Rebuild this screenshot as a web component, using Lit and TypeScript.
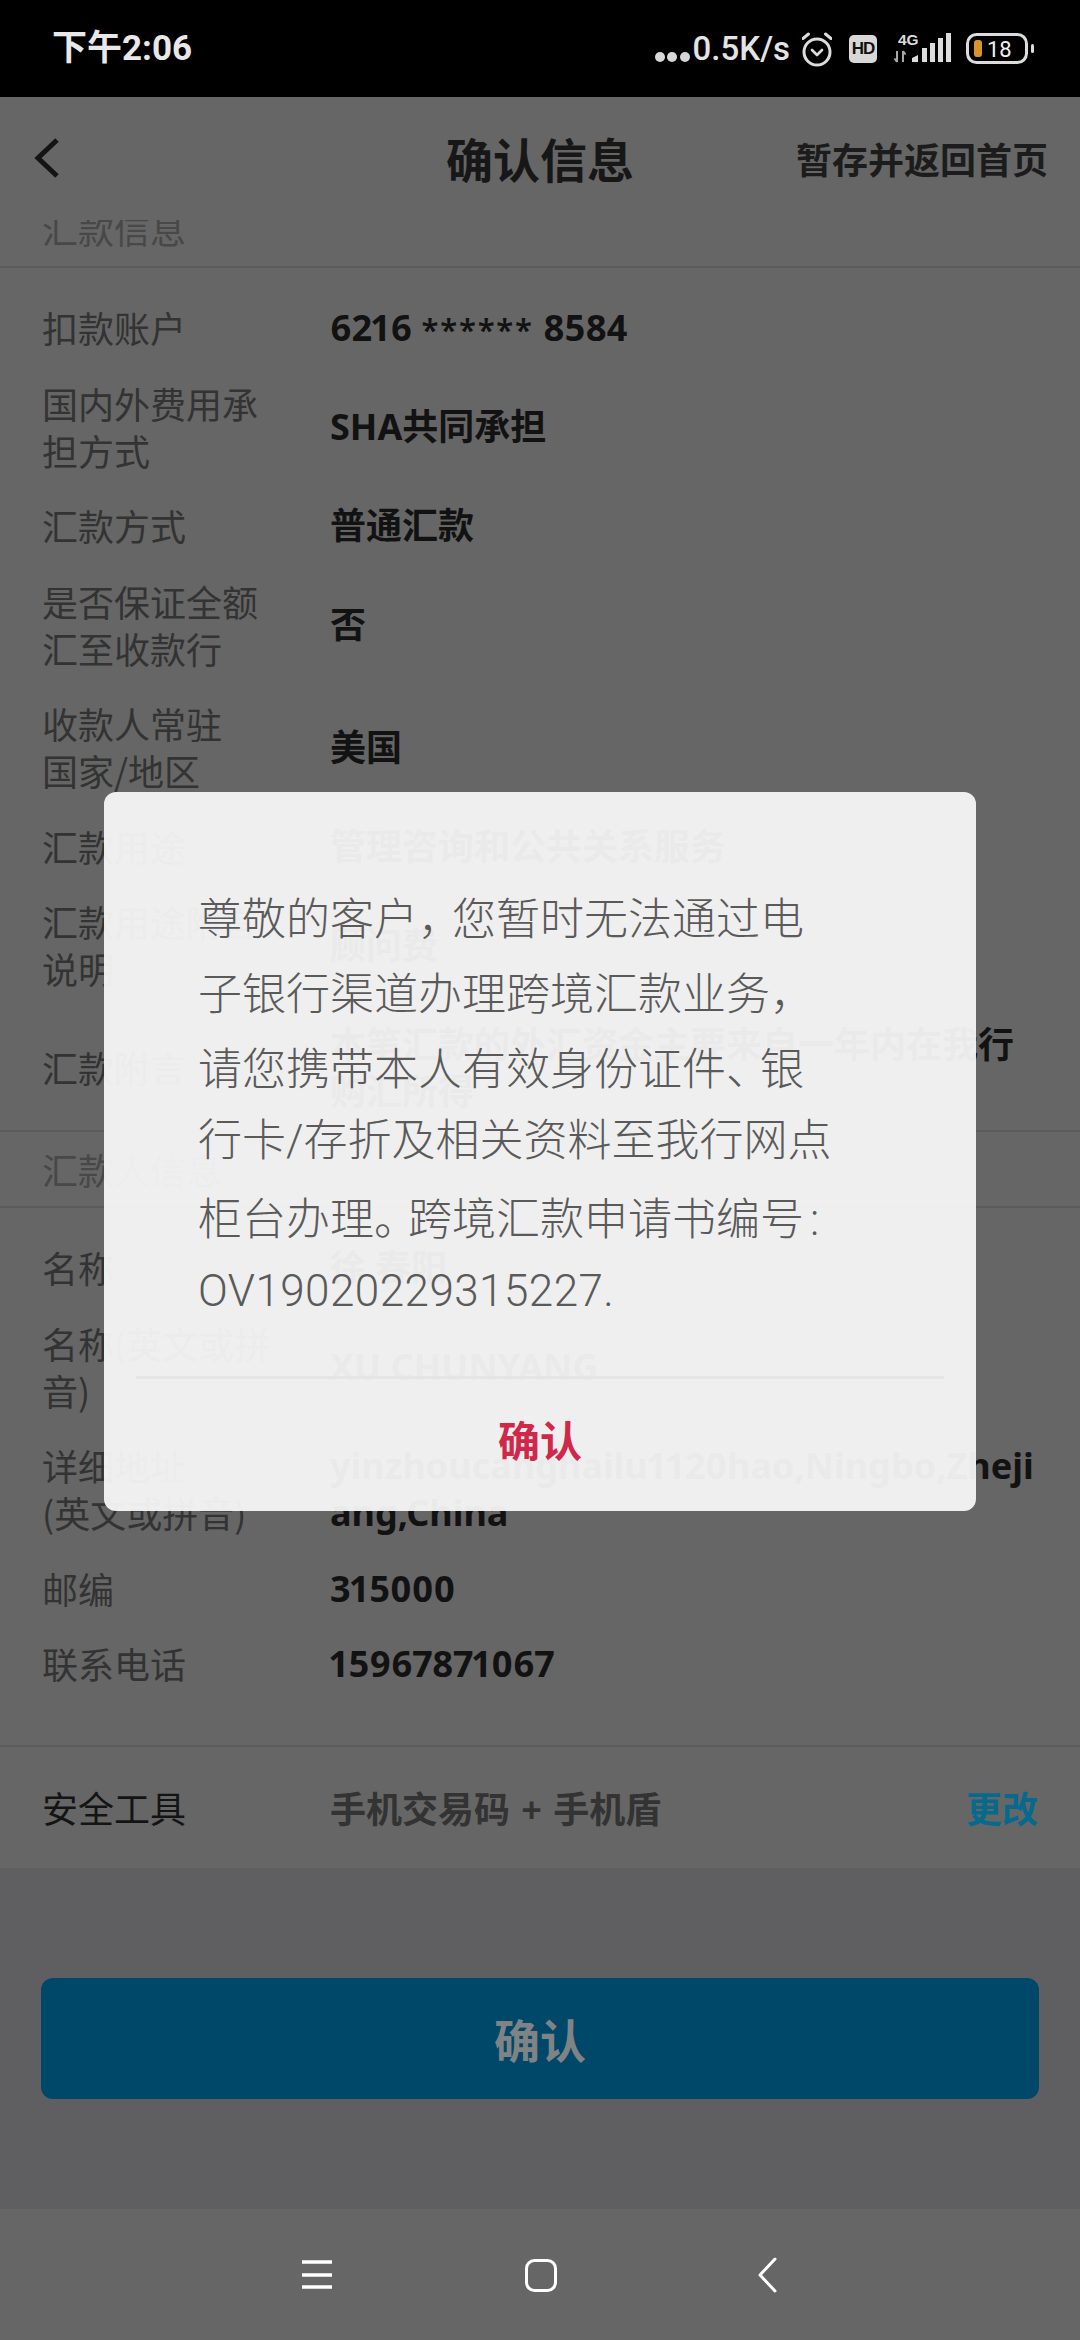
import { LitElement, html, css, svg } from "lit";
import { customElement } from "lit/decorators.js";

type Row = { label: string[]; value: unknown[]; };

const TRANSFER: Row[] = [
  { label: ["扣款账户"], value: [html`6216 <span class="stars">******</span> 8584`] },
  { label: ["国内外费用承", "担方式"], value: ["SHA共同承担"] },
  { label: ["汇款方式"], value: ["普通汇款"] },
  { label: ["是否保证全额", "汇至收款行"], value: ["否"] },
  { label: ["收款人常驻", "国家/地区"], value: ["美国"] },
  { label: ["汇款用途"], value: ["管理咨询和公共关系服务"] },
  { label: ["汇款用途附言", "说明"], value: ["顾问费"] },
  { label: ["汇款附言"], value: ["本笔汇款的外汇资金主要来自一年内在我行", "购汇所得"] },
];

const PAYER: Row[] = [
  { label: ["名称"], value: ["徐 春阳"] },
  { label: ["名称(英文或拼", "音)"], value: ["XU CHUNYANG"] },
  { label: ["详细地址", "(英文或拼音)"], value: ["yinzhoucanghailu1120hao,Ningbo,Zheji", "ang,China"] },
  { label: ["邮编"], value: ["315000"] },
  { label: ["联系电话"], value: ["15967871067"] },
];

const MESSAGE = [
  html`尊敬的客户<span class="punct">，</span>您暂时无法通过电`,
  html`子银行渠道办理跨境汇款业务<span class="punct">，</span>`,
  html`请您携带本人有效身份证件<span class="punct">、</span>银`,
  html`行卡/存折及相关资料至我行网点`,
  html`柜台办理<span class="punct">。</span>跨境汇款申请书编号<span class="colon">:</span>`,
  html`<span class="code">OV19020229315227.</span>`,
];

const statusIcons = svg`
  <circle cx="15" cy="21" r="13" fill="none" stroke="#dcdcdc" stroke-width="3"/>
  <path d="M10 19l5 5 5-5" fill="none" stroke="#dcdcdc" stroke-width="2.6" stroke-linecap="round" stroke-linejoin="round"/>
  <path d="M1 7.5 6.5 3M29 7.5 23.500 3" fill="none" stroke="#dcdcdc" stroke-width="3" stroke-linecap="round"/>
`;

@customElement("app-root")
export class AppRoot extends LitElement {
  static styles = css`
    :host {
      display: block;
      width: 1080px;
      height: 2340px;
      overflow: hidden;
      font-family: "Noto Sans CJK SC", sans-serif;
      background: #5f5f61;
    }
    .phone { display: flex; flex-direction: column; height: 2340px; }

    .status {
      height: 97px;
      flex: none;
      background: #000;
      color: #e8e8e8;
      display: flex;
      align-items: center;
      justify-content: space-between;
      padding: 0 46px 0 52px;
      box-sizing: border-box;
    }
    .time { font-size: 35px; font-weight: 700; font-family: Roboto, "Noto Sans CJK SC", sans-serif; line-height: 40px; }
    .tray { display: flex; align-items: center; }
    .dots { display: flex; gap: 2.500px; margin: 17px 3px 0 0; }
    .dots i { width: 10px; height: 10px; border-radius: 50%; background: #d8d8d8; display: block; }
    .speed { font: 500 33px/40px Roboto, sans-serif; color: #e4e4e4; margin-right: 12px; }
    .alarm { width: 30px; height: 36px; margin-right: 17px; display: block; }
    .hd {
      width: 28px; height: 28px; border-radius: 5px; background: #d8d8d8; color: #111;
      font: 700 17px/28px "Liberation Sans", sans-serif; text-align: center; margin-right: 16px; letter-spacing: -1px;
    }
    .signal { width: 58px; height: 32px; display: block; margin-right: 15px; }
    .battery { width: 68px; height: 32px; display: block; }

    .main { flex: 1; position: relative; display: flex; flex-direction: column; min-height: 0; }

    .header {
      height: 123px;
      flex: none;
      background: #666;
      position: relative;
      z-index: 1;
      display: grid;
      grid-template-columns: 1fr auto 1fr;
      align-items: center;
      padding: 0 32px 0 32px;
      box-sizing: border-box;
    }
    .back { width: 30px; height: 42px; display: block; margin-top: -2px; }
    .title { font-size: 47px; font-weight: 700; color: #171717; line-height: 60px; margin-top: -2px; }
    .save { font-size: 36px; font-weight: 700; color: #1c1c1c; justify-self: end; line-height: 50px; margin-top: -2px; white-space: nowrap; }

    .content { flex: 1; min-height: 0; overflow: hidden; display: flex; flex-direction: column; }
    .band {
      flex: none;
      height: 78px;
      box-sizing: border-box;
      border-bottom: 2px solid #5b5b5b;
      padding: 0 42px;
      display: flex;
      align-items: center;
      font-size: 36px;
      color: #484848;
      background: #666;
    }
    .band.scrolled { margin-top: -30px; }
    .band.next { border-top: 2px solid #5b5b5b; }
    .group { flex: none; background: #666; padding: 22px 0 1px; }
    .group.payer { padding-bottom: 43px; border-bottom: 2px solid #5b5b5b; }
    .row {
      display: grid;
      grid-template-columns: 288px 1fr;
      align-items: center;
      padding: 14.250px 42px;
      font-size: 36px;
      line-height: 47px;
    }
    .label { color: #333; white-space: nowrap; }
    .value {
      color: #121212;
      font-family: "Noto Sans", "Noto Sans CJK SC", sans-serif;
      font-variant-numeric: proportional-nums;
      font-weight: 700;
      white-space: nowrap;
    }
    .stars { font-size: 31px; font-weight: 600; letter-spacing: 1.800px; line-height: 1; }
    .line { display: block; }

    .tool {
      flex: none;
      height: 121px;
      background: #666;
      display: grid;
      grid-template-columns: 288px 1fr auto;
      align-items: center;
      padding: 0 42px;
      font-size: 36px;
    }
    .tool .name { color: #141414; }
    .tool .sel { color: #333; font-weight: 700; font-family: "Noto Sans", "Noto Sans CJK SC", sans-serif; word-spacing: 2px; }
    .tool .change { color: #056a8e; font-weight: 700; }

    .submit-wrap { padding: 110px 41px 0; flex: none; }
    .submit {
      height: 121px;
      background: #00486a;
      border-radius: 12px;
      display: flex;
      align-items: center;
      justify-content: center;
      color: #7f8385;
      font-size: 46px;
      font-weight: 700;
    }

    .scrim {
      position: absolute;
      inset: 0;
      z-index: 2;
      display: flex;
      align-items: center;
      justify-content: center;
      padding-bottom: 3px;
      box-sizing: border-box;
    }
    .dialog {
      width: 872px;
      height: 719px;
      border-radius: 12px;
      background: rgba(248, 248, 248, 0.94);
      box-sizing: border-box;
      padding-top: 87px;
      display: flex;
      flex-direction: column;
    }
    .msg {
      padding-left: 94px;
      font: 300 44px/75px Roboto, "Noto Sans CJK SC", sans-serif;
      color: #5a5a5a;
      white-space: nowrap;
      flex: none;
    }
    .msg div { height: 75px; }
    .punct { font-feature-settings: "halt"; font-family: "Noto Sans CJK SC", sans-serif; letter-spacing: 12px; }
    .colon { padding-left: 6px; }
    .code { letter-spacing: 0.450px; }
    .rule { height: 3px; background: #e5e5e5; margin: 47px 32px 0; flex: none; }
    .ok {
      flex: 1;
      display: flex;
      align-items: center;
      justify-content: center;
      padding-bottom: 14px;
      color: #d0284a;
      font-size: 42px;
      font-weight: 700;
    }

    .nav {
      height: 131px;
      flex: none;
      background: #666;
    }
    .nav-icons { display: block; width: 1080px; height: 131px; }
  `;

  private rows(list: Row[]) {
    return list.map(
      (r) => html`<div class="row">
        <div class="label">${r.label.map((l) => html`<span class="line">${l}</span>`)}</div>
        <div class="value">${r.value.map((l) => html`<span class="line">${l}</span>`)}</div>
      </div>`
    );
  }

  render() {
    return html`
      <div class="phone">
        <div class="status">
          <div class="time">下午2:06</div>
          <div class="tray">
            <div class="dots"><i></i><i></i><i></i></div>
            <div class="speed">0.5K/s</div>
            <svg class="alarm" viewBox="0 0 30 36">${statusIcons}</svg>
            <div class="hd">HD</div>
            <svg class="signal" viewBox="0 0 58 32">
              <text x="5" y="11.500" font-family="Liberation Sans, sans-serif" font-size="15.500" font-weight="700" fill="#dcdcdc">4G</text>
              <path d="M4 18v11M1.500 25.500 4 29M10 29V18M10 18l2.500 3.500" stroke="#a8a8a8" stroke-width="2" fill="none"/>
              <path d="M19 29v-4l6-3v7zM29 29V15h5v14zM37 29V10h5v19zM45 29V5h5v24zM53 29V0h5v29z" fill="#dcdcdc"/>
            </svg>
            <svg class="battery" viewBox="0 0 68 32">
              <rect x="1.500" y="1.500" width="59" height="28" rx="9" fill="none" stroke="#dcdcdc" stroke-width="3"/>
              <rect x="8" y="7" width="8" height="17" rx="3" fill="#d9952c"/>
              <text x="21" y="24" font-family="Roboto, sans-serif" font-size="22" fill="#f0f0f0">18</text>
              <rect x="65" y="11" width="3" height="9" rx="1.500" fill="#dcdcdc"/>
            </svg>
          </div>
        </div>

        <div class="main">
          <div class="header">
            <svg class="back" viewBox="0 0 30 42">
              <path d="M25 3 6 21l19 18" fill="none" stroke="#141414" stroke-width="5"/>
            </svg>
            <div class="title">确认信息</div>
            <div class="save">暂存并返回首页</div>
          </div>

          <div class="content">
            <div class="band scrolled">汇款信息</div>
            <div class="group">${this.rows(TRANSFER)}</div>
            <div class="band next">汇款人信息</div>
            <div class="group payer">${this.rows(PAYER)}</div>
            <div class="tool">
              <span class="name">安全工具</span>
              <span class="sel">手机交易码 + 手机盾</span>
              <span class="change">更改</span>
            </div>
            <div class="submit-wrap"><div class="submit">确认</div></div>
          </div>

          <div class="scrim">
            <div class="dialog">
              <div class="msg">${MESSAGE.map((m) => html`<div>${m}</div>`)}</div>
              <div class="rule"></div>
              <div class="ok">确认</div>
            </div>
          </div>
        </div>

        <div class="nav">
          <svg class="nav-icons" viewBox="0 0 1080 131">
            <path d="M302 53h30M302 66h30M302 78h30" stroke="#fff" stroke-width="3.500" fill="none"/>
            <rect x="526.500" y="51.500" width="29" height="30" rx="8" fill="none" stroke="#fff" stroke-width="3"/>
            <path d="M775 50 760 66l15 16" fill="none" stroke="#fff" stroke-width="3" stroke-linejoin="round" stroke-linecap="round"/>
          </svg>
        </div>
      </div>
    `;
  }
}
